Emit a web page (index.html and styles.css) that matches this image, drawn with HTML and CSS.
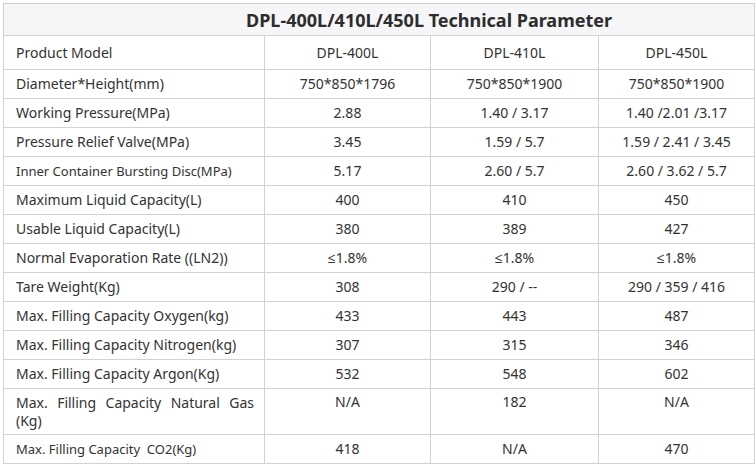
FILE: index.html
```html
<!DOCTYPE html>
<html lang="en">
<head>
<meta charset="utf-8">
<title>DPL-400L/410L/450L Technical Parameter</title>
<link rel="stylesheet" href="styles.css">
</head>
<body>
<div class="wrap">
<table class="spec">
  <colgroup>
    <col class="c1"><col class="c2"><col class="c3"><col class="c4">
  </colgroup>
  <thead>
    <tr class="title-row"><th colspan="4" class="title">DPL-400L/410L/450L Technical Parameter</th></tr>
  </thead>
  <tbody>
    <tr class="model-row"><td class="label">Product Model</td><td>DPL-400L</td><td>DPL-410L</td><td>DPL-450L</td></tr>
    <tr><td class="label">Diameter*Height(mm)</td><td>750*850*1796</td><td>750*850*1900</td><td>750*850*1900</td></tr>
    <tr><td class="label">Working Pressure(MPa)</td><td>2.88</td><td>1.40 / 3.17</td><td>1.40 /2.01 /3.17</td></tr>
    <tr><td class="label">Pressure Relief Valve(MPa)</td><td>3.45</td><td>1.59 / 5.7</td><td>1.59 / 2.41 / 3.45</td></tr>
    <tr><td class="label small">Inner Container Bursting Disc(MPa)</td><td>5.17</td><td>2.60 / 5.7</td><td>2.60 / 3.62 / 5.7</td></tr>
    <tr><td class="label">Maximum Liquid Capacity(L)</td><td>400</td><td>410</td><td>450</td></tr>
    <tr><td class="label">Usable Liquid Capacity(L)</td><td>380</td><td>389</td><td>427</td></tr>
    <tr><td class="label">Normal Evaporation Rate ((LN2))</td><td>≤1.8%</td><td>≤1.8%</td><td>≤1.8%</td></tr>
    <tr><td class="label">Tare Weight(Kg)</td><td>308</td><td>290 / --</td><td>290 / 359 / 416</td></tr>
    <tr><td class="label">Max. Filling Capacity Oxygen(kg)</td><td>433</td><td>443</td><td>487</td></tr>
    <tr><td class="label">Max. Filling Capacity Nitrogen(kg)</td><td>307</td><td>315</td><td>346</td></tr>
    <tr><td class="label">Max. Filling Capacity Argon(Kg)</td><td>532</td><td>548</td><td>602</td></tr>
    <tr class="tall-row"><td class="label justify">Max. Filling Capacity Natural Gas (Kg)</td><td class="top">N/A</td><td class="top">182</td><td class="top">N/A</td></tr>
    <tr><td class="label small pre">Max. Filling Capacity  CO2(Kg)</td><td>418</td><td>N/A</td><td>470</td></tr>
  </tbody>
</table>
</div>
</body>
</html>
```
FILE: styles.css
```css
html, body {
  margin: 0;
  padding: 0;
  background: #ffffff;
}
.wrap {
  padding: 3px 0 0 3px;
}
.spec {
  border-collapse: collapse;
  table-layout: fixed;
  width: 751px;
  font-family: "Noto Sans", "Open Sans", "Liberation Sans", sans-serif;
  font-size: 14px;
  color: #333333;
}
.c1 { width: 261px; }
.c2 { width: 166px; }
.c3 { width: 168px; }
.c4 { width: 156px; }
.spec th, .spec td {
  border: 1px solid #d2d2d2;
  padding: 0 8px;
  height: 28px;
  text-align: center;
  vertical-align: middle;
  line-height: 18px;
}
.title-row th {
  background: #f6f6f8;
  height: 31px;
  font-size: 18px;
  font-weight: bold;
  padding-left: 100px;
  padding-right: 0;
  color: #2d2d2d;
}
.model-row td { height: 33px; }
.spec td.label {
  text-align: left;
  padding-left: 12px;
}
.spec td.small { font-size: 13px; }
.spec td.pre { white-space: pre; }
.spec td.justify {
  text-align: justify;
  padding-right: 10px;
}
.tall-row td { height: 41px; }
.spec td.top {
  vertical-align: top;
  padding-top: 4px;
}
```
